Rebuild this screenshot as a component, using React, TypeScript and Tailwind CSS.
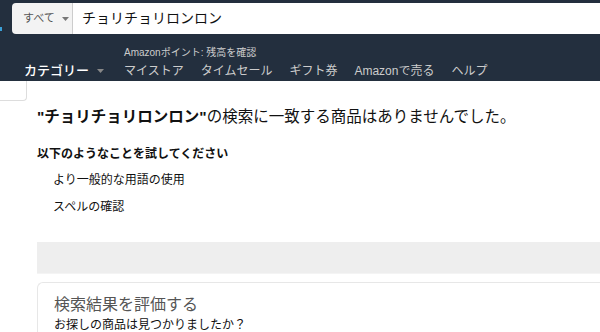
import React from 'react';

const font = { fontFamily: '"Liberation Sans", "Noto Sans CJK JP", sans-serif' };

function Caret({ className }: { className: string }): JSX.Element {
  return (
    <svg width="7" height="4" viewBox="0 0 7 4" className={className}>
      <path d="M0 0 L7 0 L3.5 4 Z" fill="currentColor" />
    </svg>
  );
}

const links = ['マイストア', 'タイムセール', 'ギフト券', 'Amazonで売る', 'ヘルプ'];

export default function App(): JSX.Element {
  return (
    <div className="w-[600px] h-[332px] overflow-hidden bg-white text-[#111]" style={font}>
      <header className="h-[81px] bg-[#232f3e] relative">
        <div className="absolute left-0 top-[27px] w-[2px] h-[4px] bg-[#3aa0d8]" />
        <div className="flex pt-[3px] pl-[12px]">
          <div className="flex h-[31px] w-full rounded-l-[4px] overflow-hidden">
            <div className="flex items-center gap-[7px] w-[61px] bg-[#f3f3f3] border-r border-[#cdcdcd] pl-[11px] text-[11px] text-[#555]">
              <span>すべて</span>
              <Caret className="text-[#777]" />
            </div>
            <div className="flex-1 bg-white flex items-center pl-[9px] text-[14px] text-[#111]">
              チョリチョリロンロン
            </div>
          </div>
        </div>
        <div className="flex pl-[24px] pt-[12px]">
          <div className="flex items-center gap-[8px] w-[100px] pt-[15px] text-[13px] font-medium text-white">
            <span>カテゴリー</span>
            <Caret className="text-[#888]" />
          </div>
          <div className="flex flex-col">
            <span className="text-[10px] leading-[14px] text-[#ccc]">Amazonポイント: 残高を確認</span>
            <div className="flex gap-[17px] text-[12px] leading-[20px] text-[#ccc] mt-[1px]">
              {links.map((l) => (
                <span key={l}>{l}</span>
              ))}
            </div>
          </div>
        </div>
      </header>
      <main className="flex flex-col">
        <div className="w-[27px] h-[20px] border-r border-b border-[#ddd] rounded-br-[4px]" />
        <div className="pl-[37px]">
          <h1 className="mt-[4px] text-[15.5px] leading-[24px]">
            <span className="font-bold">"チョリチョリロンロン"</span>の検索に一致する商品はありませんでした。
          </h1>
          <p className="mt-[16px] text-[12px] leading-[18px] font-bold">以下のようなことを試してください</p>
          <ul className="mt-[8px] pl-[16px] text-[12px] leading-[18px] flex flex-col gap-[9px]">
            <li>より一般的な用語の使用</li>
            <li>スペルの確認</li>
          </ul>
          <div className="mt-[26px] h-[32px] bg-[#eeeeee] border-b border-[#f4f4f4]" />
          <div className="mt-[8px] border-t border-l border-[#e7e7e7] rounded-tl-[6px] pl-[16px] pt-[11px]">
            <h2 className="text-[16px] leading-[22px] text-[#555]">検索結果を評価する</h2>
            <p className="text-[12px] leading-[18px] text-[#111]">お探しの商品は見つかりましたか？</p>
          </div>
        </div>
      </main>
    </div>
  );
}
